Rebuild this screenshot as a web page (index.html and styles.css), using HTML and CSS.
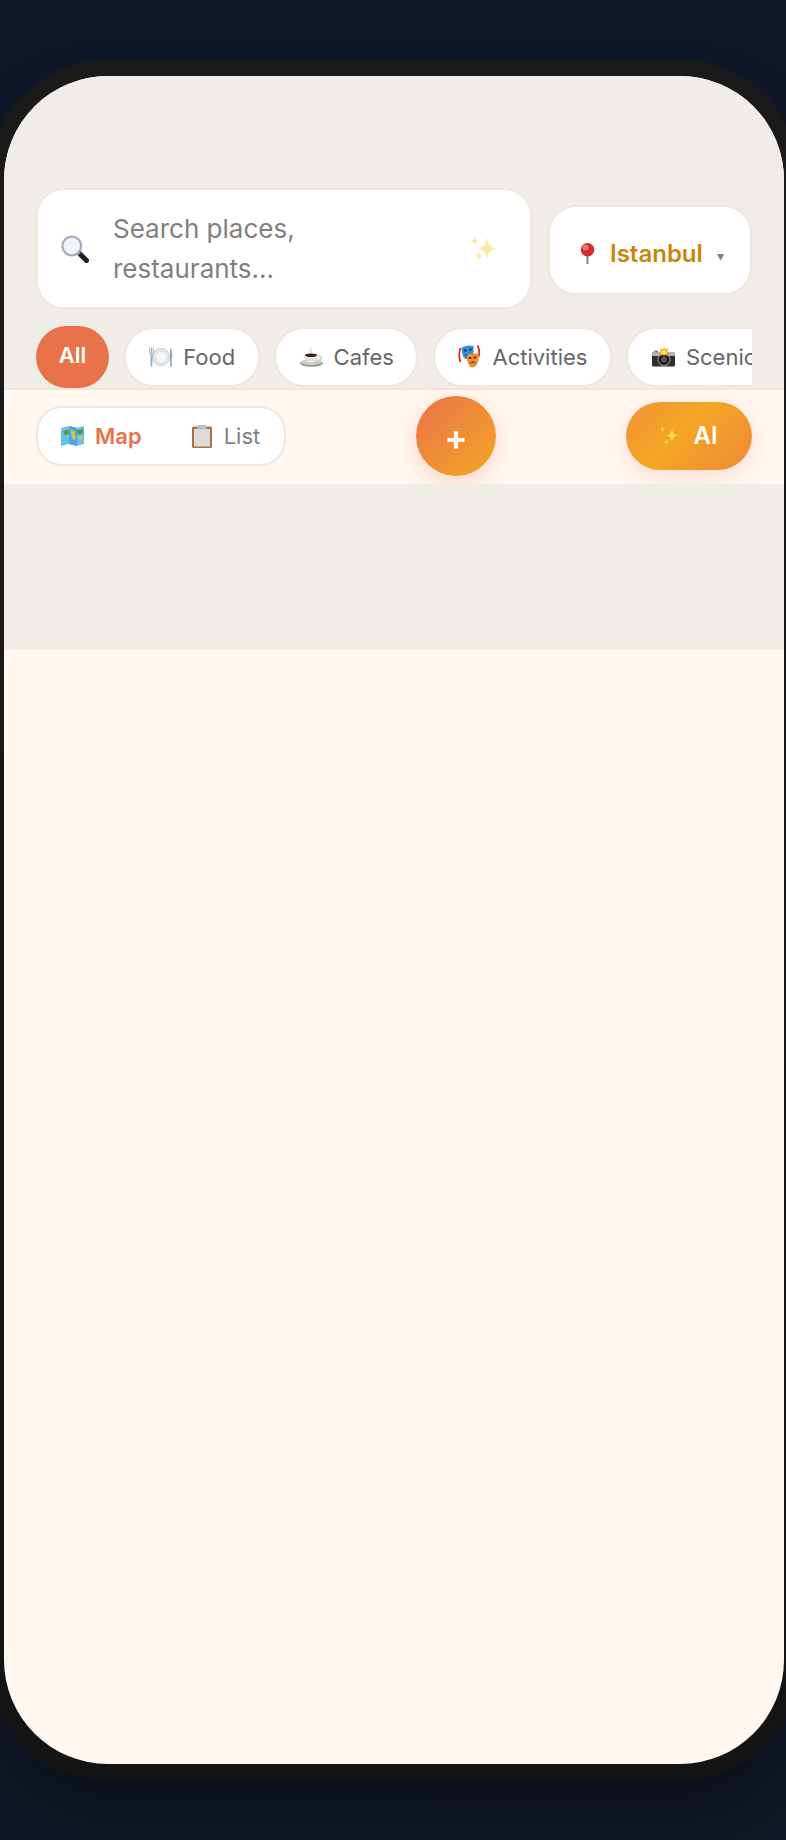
FILE: index.html
```html
<!DOCTYPE html>
<html lang="en">
<head>
  <meta charset="UTF-8" />
  <meta name="viewport" content="width=device-width, initial-scale=1.0">
  <title>Explore Places</title>
  <link rel="stylesheet" href="styles.css">
</head>
<body>

  <div class="phone">
    <div class="screen">

      <div class="top-area">
        <div class="search-row">
          <div class="search-box">
            <svg class="search-icon" width="28" height="28" viewBox="0 0 28 28">
              <path d="M18 18 L25.5 25.5" stroke="#18212b" stroke-width="5" stroke-linecap="round"/>
              <path d="M17 17 L19 19" stroke="#6d7780" stroke-width="3"/>
              <circle cx="10.8" cy="11" r="9.4" fill="#f1f3f5" stroke="#a3afba" stroke-width="2.2"/>
            </svg>
            <span class="search-text">Search places, restaurants...</span>
            <svg class="search-spark" width="26" height="25" viewBox="0 0 26 25">
              <path d="M16 1 Q16.6 11.4 25 12.5 Q16.6 13.6 16 24 Q15.4 13.6 7 12.5 Q15.4 11.4 16 1Z" fill="#fbd84a"/>
              <path d="M4 0.5 Q4.3 4.7 8 5 Q4.3 5.3 4 9.5 Q3.7 5.3 0 5 Q3.7 4.7 4 0.5Z" fill="#fbc93a"/>
              <path d="M8 15.5 Q8.3 19.7 12 20 Q8.3 20.3 8 24.5 Q7.7 20.3 4 20 Q7.7 19.7 8 15.5Z" fill="#fbc93a"/>
            </svg>
          </div>
          <div class="city-picker">
            <svg class="city-pin" width="15" height="21" viewBox="0 0 15 21">
              <path d="M7.5 11 V21" stroke="#87817d" stroke-width="2"/>
              <circle cx="7.5" cy="6.8" r="6.8" fill="#d42c2f"/>
              <circle cx="5.5" cy="4.6" r="3" fill="#f0706a"/>
            </svg>
            <span class="city-name">Istanbul</span>
            <span class="city-caret">▾</span>
          </div>
        </div>

        <div class="chips">
          <div class="chip chip-active">All</div>
          <div class="chip">
            <svg class="chip-icon" width="24" height="20" viewBox="0 0 24 20">
              <circle cx="12" cy="10" r="8.5" fill="#e7eaed" stroke="#c4cbd2"/>
              <circle cx="12" cy="10" r="5.6" fill="#f6f7f8" stroke="#d5d9dd" stroke-width="0.6"/>
              <path d="M2.5 8 V19.5" stroke="#8fa9c2" stroke-width="1.8"/>
              <path d="M0.8 0.5 V6 Q0.8 8 2.5 8 Q4.2 8 4.2 6 V0.5 M2.5 0.5 V7" fill="none" stroke="#8fa9c2" stroke-width="0.9"/>
              <path d="M21 0.5 Q23.8 4 23.2 11 H22.8 V19.5 H21Z" fill="#8fa9c2"/>
            </svg>
            Food
          </div>
          <div class="chip">
            <svg class="chip-icon" width="24" height="20" viewBox="0 0 24 20">
              <path d="M11 0.5 q-1.5 1.5 0 3 q1 1.2 0 2.5" fill="none" stroke="#c9c9c9"/>
              <ellipse cx="11.5" cy="16.3" rx="11.5" ry="3.5" fill="#8f8f8a"/>
              <ellipse cx="11.5" cy="15.2" rx="10.5" ry="3" fill="#cbc9c2"/>
              <path d="M18 9 q5 0 3 3 q-1 1.5 -4 1.5" fill="none" stroke="#cfcdc6" stroke-width="1.4"/>
              <path d="M3.5 8 Q4 15 11 16 Q18 15 18.5 8Z" fill="#e4e2dc"/>
              <ellipse cx="11" cy="8" rx="7.5" ry="2.4" fill="#f3f2ee"/>
              <ellipse cx="11" cy="8.3" rx="6" ry="1.8" fill="#3b2317"/>
            </svg>
            Cafes
          </div>
          <div class="chip">
            <svg class="chip-icon" width="24" height="23" viewBox="0 0 24 23">
              <path d="M2.5 3 Q0 10 2.5 17" fill="none" stroke="#d0312d" stroke-width="1.8"/>
              <path d="M19.5 0.5 Q22.5 6 20.5 12" fill="none" stroke="#d0312d" stroke-width="1.8"/>
              <path d="M3.5 2.5 Q10 -0.5 15.5 1 Q16.5 9 12.5 13 Q8.5 15.5 5.5 12.5 Q3.5 8 3.5 2.5Z" fill="#2f8fd8"/>
              <ellipse cx="7.2" cy="5.6" rx="1.6" ry="1" fill="#12395c"/>
              <ellipse cx="12.4" cy="4.6" rx="1.6" ry="1" fill="#12395c"/>
              <path d="M6.5 9 Q10 11 13.5 8 Q11 13 8.5 12Z" fill="#12395c"/>
              <path d="M8.5 10 Q14.5 7 20.5 9 Q21.5 17 17.5 21 Q14.5 24 11.5 21 Q8.5 17 8.5 10Z" fill="#ec9038"/>
              <ellipse cx="12" cy="13" rx="1.6" ry="1" fill="#5b2a0a"/>
              <ellipse cx="17" cy="12.6" rx="1.6" ry="1" fill="#5b2a0a"/>
              <path d="M11.5 19 Q14.5 14.5 18 18.5 Q14.5 17 11.5 19Z" fill="#5b2a0a"/>
            </svg>
            Activities
          </div>
          <div class="chip">
            <svg class="chip-icon" width="24" height="20" viewBox="0 0 24 20">
              <rect x="0" y="5" width="23" height="14.5" rx="1.5" fill="#2e2e2e"/>
              <rect x="0" y="5" width="23" height="4" rx="1" fill="#b5b5b5"/>
              <rect x="2" y="3.5" width="4" height="2" fill="#8c8c8c"/>
              <circle cx="12" cy="12.5" r="6" fill="#1d1d1d" stroke="#8c8c8c" stroke-width="1.2"/>
              <circle cx="12" cy="12.5" r="2.8" fill="#5a5a5a"/>
              <path d="M12 0 L13.2 2.6 L16.5 1 L15 4.2 L18 5.5 L15 6.8 L16 9 L12.8 7.8 L12 10 L11.2 7.8 L8 9 L9 6.8 L6 5.5 L9 4.2 L7.5 1 L10.8 2.6Z" fill="#ffab1f"/>
              <circle cx="12" cy="5.3" r="2" fill="#fff0a8"/>
            </svg>
            Scenic
          </div>
        </div>
      </div>

      <div class="toolbar">
        <div class="view-toggle">
          <div class="view-btn view-active">
            <svg class="view-icon" width="24" height="20" viewBox="0 0 24 20">
              <path d="M0 2 L8 0 L16 2 L23 0 V18 L16 20 L8 18 L0 20Z" fill="#6cc0ec"/>
              <path d="M8 0 L16 2 V20 L8 18Z" fill="#4fa6dc"/>
              <path d="M2 5 L7 3.5 L8 7 L5 9.5 L3 8Z" fill="#4f9a3f"/>
              <path d="M10 4 L14 5 L13.5 8 L15 12 L12.5 14.5 L10.5 10Z" fill="#e2c23a"/>
              <path d="M16 4.5 L21.5 3 L22 7 L19 9 L16.5 8Z" fill="#4f9a3f"/>
              <path d="M18 11 L21 10.5 L21 14 L18.5 14.5Z" fill="#e2c23a"/>
            </svg>
            Map
          </div>
          <div class="view-btn">
            <svg class="view-icon" width="24" height="23" viewBox="-2 0 24 23">
              <rect x="0" y="1.5" width="20" height="21.5" rx="1.5" fill="#a9743c"/>
              <rect x="2" y="4" width="16" height="17.5" fill="#dcdcdc"/>
              <rect x="5.5" y="0" width="9" height="4.5" rx="1" fill="#b9c0c6"/>
            </svg>
            List
          </div>
        </div>
        <div class="add-btn">+</div>
        <div class="ai-btn">
          <svg class="ai-icon" width="18" height="19" viewBox="0 0 18 19">
            <path d="M12 2.5 Q12.4 9 18 9.5 Q12.4 10 12 16.5 Q11.6 10 6 9.5 Q11.6 9 12 2.5Z" fill="#ffe14d"/>
            <path d="M2.5 0 Q2.7 3 5 3.3 Q2.7 3.6 2.5 6.6 Q2.3 3.6 0 3.3 Q2.3 3 2.5 0Z" fill="#ffe14d"/>
            <path d="M6.5 13.5 Q6.7 15.8 9 16 Q6.7 16.2 6.5 18.5 Q6.3 16.2 4 16 Q6.3 15.8 6.5 13.5Z" fill="#ffe14d"/>
          </svg>
          AI
        </div>
      </div>

      <div class="map-area"></div>
      <div class="rest"></div>

    </div>
  </div>

</body>
</html>
```

FILE: styles.css
```css
* {
  box-sizing: border-box;
}

html, body {
  margin: 0;
  height: 1840px;
  overflow: hidden;
}

body {
  font-family: Inter, "Noto Sans", sans-serif;
  background: linear-gradient(135deg, #0f172a, #111827);
  padding-top: 60px;
}

.phone {
  width: 812px;
  height: 1720px;
  margin-left: -12px;
  padding: 16px;
  background: linear-gradient(#1a1a1a, #141414);
  border-radius: 120px;
  box-shadow: 0 40px 60px rgba(0, 0, 0, 0.3);
}

.screen {
  height: 100%;
  border-radius: 104px;
  overflow: hidden;
  background: #fff7f0;
  display: flex;
  flex-direction: column;
}

.top-area {
  background: #f0ede8;
  padding: 112px 32px 0;
  border-bottom: 2px solid #f0e6dc;
}

.search-row {
  display: flex;
  align-items: flex-start;
  gap: 16px;
}

.search-box {
  flex: 1;
  min-height: 121px;
  display: flex;
  align-items: center;
  background: white;
  border: 2px solid #f0e6dc;
  border-radius: 28px;
  padding: 0 23px;
}

.search-icon {
  flex-shrink: 0;
  margin-top: 1px;
  margin-right: 24px;
}

.search-text {
  width: 250px;
  margin-right: auto;
  font-size: 26px;
  line-height: 40px;
  color: #808080;
}

.search-spark {
  flex-shrink: 0;
  margin-right: 10px;
  opacity: 0.5;
}

.city-picker {
  width: 204px;
  height: 90px;
  margin-top: 17px;
  display: flex;
  align-items: center;
  padding: 6px 0 0 30px;
  background: white;
  border: 2px solid #f0e6dc;
  border-radius: 28px;
}

.city-pin {
  flex-shrink: 0;
  margin-right: 15px;
}

.city-name {
  font-size: 24px;
  font-weight: 600;
  color: #c8860a;
}

.city-caret {
  font-size: 14px;
  color: #808080;
  margin-left: 14px;
  padding-top: 5px;
}

.chips {
  display: flex;
  align-items: center;
  gap: 14.5px;
  margin-top: 17px;
  overflow: hidden;
}

.chip {
  flex-shrink: 0;
  height: 60px;
  display: flex;
  align-items: center;
  padding: 0 22.5px 1px 23.5px;
  background: white;
  border: 2px solid #f0e6dc;
  border-radius: 30px;
  font-size: 22px;
  color: #666;
}

.chip-icon {
  flex-shrink: 0;
  margin-right: 10px;
}

.chip-active {
  height: 62px;
  padding: 0 22.8px 5px;
  background: #e8734a;
  border: none;
  border-radius: 31px;
  font-weight: 600;
  color: white;
}

.toolbar {
  height: 94px;
  flex-shrink: 0;
  display: flex;
  align-items: center;
  justify-content: space-between;
  padding: 0 32px 2px;
  background: #fff7f0;
}

.view-toggle {
  width: 250px;
  height: 60px;
  display: flex;
  align-items: center;
  gap: 48px;
  padding: 0 23px;
  background: white;
  border: 2px solid #f0e6dc;
  border-radius: 26px;
}

.view-btn {
  display: flex;
  align-items: center;
  font-size: 22px;
  color: #808080;
}

.view-icon {
  flex-shrink: 0;
  margin-right: 10px;
}

.view-active {
  font-weight: 600;
  color: #e8734a;
}

.add-btn {
  width: 80px;
  height: 80px;
  display: flex;
  align-items: center;
  justify-content: center;
  padding-top: 1px;
  border-radius: 50%;
  background: linear-gradient(135deg, #e8734a, #f5a623);
  box-shadow: 0 6px 20px rgba(232, 115, 74, 0.25);
  font-size: 35px;
  font-weight: 600;
  color: white;
}

.ai-btn {
  width: 126px;
  height: 68px;
  display: flex;
  align-items: center;
  justify-content: center;
  padding-bottom: 1px;
  border-radius: 34px;
  background: linear-gradient(135deg, #ee9239 0%, #f5a623 43%, #ec8a3a 100%);
  box-shadow: 0 6px 20px rgba(232, 115, 74, 0.2);
  font-size: 24px;
  font-weight: 600;
  color: white;
}

.ai-icon {
  flex-shrink: 0;
  margin-right: 15px;
}

.map-area {
  height: 166px;
  flex-shrink: 0;
  background: #f0ede8;
}

.rest {
  flex: 1;
}
```
